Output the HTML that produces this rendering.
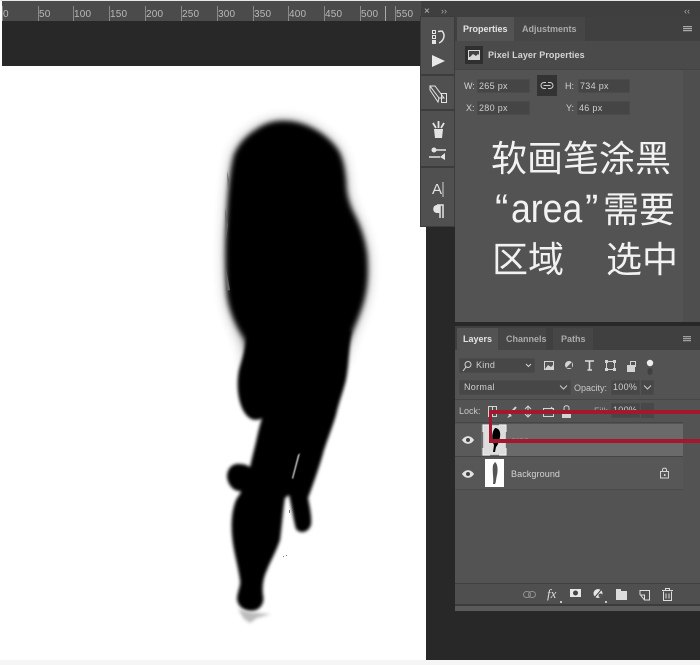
<!DOCTYPE html>
<html><head><meta charset="utf-8"><style>
html,body{margin:0;padding:0;background:#fff}
#p{position:relative;width:700px;height:665px;overflow:hidden;background:#f6f5f5;font-family:"Liberation Sans","Noto Sans CJK SC",sans-serif;color:#d2d2d2;font-size:9px;filter:blur(.3px)}
#p div,#p span.a{position:absolute}
.t{white-space:nowrap;line-height:12px;font-weight:400}
.b{font-weight:700}
.inp{background:#454545;height:14px;box-shadow:inset 0 0 0 1px #4b4b4b;white-space:nowrap;line-height:14px;padding-left:2px;box-sizing:border-box;color:#cfcfcf;font-size:9px;letter-spacing:.3px}
.rt{color:#b8b8b8;font-size:10px;top:9px;line-height:12px;letter-spacing:.2px}
.tick{background:#8a8a8a;width:1px;top:6px;height:15px}
.big{color:#f2f2f2;font-size:36px;line-height:44px;white-space:nowrap;font-family:"Liberation Sans","Noto Sans CJK SC",sans-serif}
svg{position:absolute;overflow:visible}
</style></head><body><div id="p">
<div style="left:2px;top:1px;width:424px;height:20px;background:#4b4b4b"></div>
<div style="left:2px;top:21px;width:424px;height:45px;background:#282828"></div>
<div style="left:2px;top:66px;width:424px;height:594px;background:#fff"></div>
<div style="left:0;top:0;width:2px;height:660px;background:#fff"></div>
<div style="left:426px;top:1px;width:274px;height:659px;background:#282828"></div>
<div style="left:421px;top:1px;width:279px;height:16px;background:#3f3f3f"></div>
<div style="left:0;top:0;width:700px;height:1px;background:#e8e8e8"></div>
<div class="tick" style="left:2px"></div><div class="rt t a" style="left:3px">0</div>
<div class="tick" style="left:38px"></div><div class="rt t a" style="left:39px">50</div>
<div class="tick" style="left:73px"></div><div class="rt t a" style="left:74px">100</div>
<div class="tick" style="left:109px"></div><div class="rt t a" style="left:110px">150</div>
<div class="tick" style="left:145px"></div><div class="rt t a" style="left:146px">200</div>
<div class="tick" style="left:181px"></div><div class="rt t a" style="left:182px">250</div>
<div class="tick" style="left:217px"></div><div class="rt t a" style="left:218px">300</div>
<div class="tick" style="left:253px"></div><div class="rt t a" style="left:254px">350</div>
<div class="tick" style="left:288px"></div><div class="rt t a" style="left:289px">400</div>
<div class="tick" style="left:324px"></div><div class="rt t a" style="left:325px">450</div>
<div class="tick" style="left:360px"></div><div class="rt t a" style="left:361px">500</div>
<div class="tick" style="left:385px;background:#aaa"></div><div class="tick" style="left:395px"></div><div class="rt t a" style="left:396px">550</div>
<svg style="left:0;top:0" width="700" height="665" viewBox="0 0 700 665">
<defs><filter id="f1" x="-30%" y="-30%" width="160%" height="160%"><feGaussianBlur stdDeviation="2.6"/></filter>
<filter id="f0" x="-30%" y="-30%" width="160%" height="160%"><feGaussianBlur stdDeviation="7"/></filter>
<filter id="f2" x="-30%" y="-30%" width="160%" height="160%"><feGaussianBlur stdDeviation="1.5"/></filter>
<filter id="f3" x="-50%" y="-50%" width="200%" height="200%"><feGaussianBlur stdDeviation="1.5"/></filter>
<filter id="f4" x="-50%" y="-50%" width="200%" height="200%"><feGaussianBlur stdDeviation=".6"/></filter></defs>
<path filter="url(#f0)" opacity=".45" d="M283 122C295 122 304 125 312 129C322 134 331 142 337 150C342 158 344 170 345 182C345 194 348 203 352 212C358 223 364 238 366 255C367 270 367 285 363 300C360 312 354 325 350 335L340 365L300 395L250 380L245 345C236 325 230 310 228 295C226 270 226 240 228 215C229 195 231 170 235 155C241 141 251 133 262 127C270 123 277 122 283 122Z"/>
<path filter="url(#f1)" d="M283 121C295 121 304 124 312 128C322 133 332 141 338 150C343 158 345 170 346 182C346 194 349 203 353 212C359 223 365 238 367 255C368 270 368 285 364 300C361 312 355 325 351 335L340 365L300 395L250 380L245 340C235 325 229 310 227 295C225 270 225 240 227 215C228 195 230 170 234 155C240 141 250 133 262 126C270 122 277 121 283 121Z"/>
<path filter="url(#f2)" d="M248 332L351 330C349 345 349 365 346 380C343 392 339 402 336 415C332 428 328 438 324 450C320 465 314 482 308 498C310 508 312 518 311 525C308 533 300 534 296 529C293 518 292 508 289 495L285 498C283 510 282 525 280 540C276 552 270 562 267 570C263 578 262 588 263 595C265 603 260 611 251 611C243 611 237 605 237 598C238 590 241 585 240 580C238 565 233 550 232 535C231 522 232 510 236 500C239 495 241 493 241 491C234 492 228 485 227 477C227 468 233 463 240 464C245 464 248 466 250 467C252 458 254 450 256 442C258 432 260 425 262 418C256 422 248 420 243 410C238 400 236 385 239 370C243 355 247 345 248 332Z"/>
<path filter="url(#f4)" fill="#ddd" d="M300 453L293 479L292 478L298 455Z"/>
<path filter="url(#f3)" fill="#bcbcbc" d="M238 609C245 612 258 613 271 614L257 618L250 623L244 619Z"/>
<path fill="#777" d="M289 510h1v3h-1zM283 556h1v1h-1zM286 555h1v1h-1z"/>
<path fill="#666" d="M227 171L229 180L228 190ZM225 208L228 225L226 240ZM226 268L230 290L226 291Z"/>
</svg>
<div style="left:421px;top:17px;width:33px;height:209px;background:#505050;box-shadow:0 0 0 1px #3c3c3c"></div>
<div style="left:421px;top:74px;width:33px;height:2px;background:#3c3c3c"></div>
<div style="left:421px;top:109px;width:33px;height:2px;background:#3c3c3c"></div>
<div style="left:421px;top:166px;width:33px;height:2px;background:#3c3c3c"></div>
<div class="t a" style="left:424px;top:6px;color:#c4c4c4;font-size:10px">×</div>
<div class="t a" style="left:441px;top:5px;color:#aaa;font-size:9px">››</div>
<div class="t a" style="left:684px;top:5px;color:#aaa;font-size:9px">‹‹</div>
<svg style="left:421px;top:17px" width="33" height="209" viewBox="0 0 33 209" fill="none" stroke="#e4e4e4">
<rect x="11.5" y="13.5" width="3" height="3"/><rect x="11.5" y="18.5" width="3" height="3"/><rect x="11" y="23" width="4" height="4" fill="#e4e4e4" stroke="none"/>
<path d="M17 14.500L21 14C24 17 24 23 18 26" stroke-width="1.500"/>
<path d="M11 38L24 44L11 50Z" fill="#e8e8e8" stroke="none"/>
<path d="M9 69L14 69L23 81L18 81ZM9 69L9 73L17 85L18 81" stroke-width="1"/><rect x="20.500" y="76.500" width="5" height="9"/>
<path d="M15 111L12 106M17.500 111L17.500 104M20 111L23 106" stroke-width="1.800"/><path d="M13 112H22L21 121H14Z" fill="#e4e4e4" stroke="none"/>
<circle cx="13" cy="133" r="2.500" fill="#e4e4e4" stroke="none"/>
<path d="M15 133H25M8 140H19" stroke-width="1.500"/>
<path d="M19 140L24 136V143Z" fill="#e4e4e4" stroke="none"/>
<path d="M22 165V180" stroke-width="1" stroke="#cfcfcf"/>
<path d="M16 188H22V201M19 188V201" stroke-width="1.500"/>
<path d="M16 188C11 188 11 196 16 196H19V188Z" fill="#e4e4e4" stroke="none"/>
</svg>
<div class="t a" style="left:432px;top:182px;font-size:15px;line-height:16px;color:#e2e2e2">A</div>
<div style="left:455px;top:17px;width:245px;height:305px;background:#535353"></div>
<div style="left:455px;top:17px;width:245px;height:24px;background:#404040"></div>
<div style="left:457px;top:17px;width:57px;height:24px;background:#535353"></div>
<div style="left:514px;top:17px;width:71px;height:24px;background:#464646"></div>
<div class="t b a" style="left:463px;top:23px;color:#e4e4e4">Properties</div>
<div class="t b a" style="left:522px;top:23px;color:#aaa">Adjustments</div>
<div style="left:683px;top:26px;width:9px;height:6px;background:repeating-linear-gradient(#a8a8a8 0 1px,#585858 1px 2px)"></div>
<div style="left:455px;top:41px;width:245px;height:28px;background:#4a4a4a"></div>
<div style="left:455px;top:69px;width:245px;height:1px;background:#444"></div>
<div style="left:465px;top:46px;width:18px;height:18px;background:#2f2f2f"></div>
<svg style="left:465px;top:46px" width="18" height="18" viewBox="0 0 18 18"><rect x="3" y="4" width="12" height="10" fill="#d8d8d8"/><rect x="4" y="5" width="10" height="6" fill="#444"/><path d="M4 12L8 8L11 10L13 8L14 9V13H4Z" fill="#d8d8d8"/></svg>
<div class="t b a" style="left:488px;top:49px;color:#d4d4d4;letter-spacing:.1px">Pixel Layer Properties</div>
<div style="left:683px;top:70px;width:17px;height:252px;background:#4e4e4e"></div>
<div class="t a" style="left:464px;top:80px">W:</div><div class="inp" style="left:477px;top:79px;width:53px">265 px</div>
<div class="t a" style="left:466px;top:102px">X:</div><div class="inp" style="left:477px;top:101px;width:53px">280 px</div>
<div style="left:537px;top:75px;width:20px;height:21px;background:#333"></div>
<svg style="left:537px;top:75px" width="20" height="21" viewBox="0 0 20 21" fill="none" stroke="#d0d0d0"><path d="M9 7.500H7a3 3 0 0 0 0 6H9M11 7.500H13a3 3 0 0 1 0 6H11M6.500 10.500H13.500"/></svg>
<div class="t a" style="left:565px;top:80px">H:</div><div class="inp" style="left:578px;top:79px;width:52px">734 px</div>
<div class="t a" style="left:566px;top:102px">Y:</div><div class="inp" style="left:577px;top:101px;width:53px">46 px</div>
<div class="big a" style="left:491px;top:137px">软画笔涂黑</div>
<div class="big a" style="left:495px;top:187px;font-size:40px">“</div>
<div class="big a" style="left:511px;top:187px;font-size:40px;transform:scaleX(.89);transform-origin:0 0">area</div>
<div class="big a" style="left:585px;top:187px;font-size:40px">”</div>
<div class="big a" style="left:603px;top:188px">需要</div>
<div class="big a" style="left:492px;top:238px">区域</div>
<div class="big a" style="left:606px;top:238px">选中</div>
<div style="left:455px;top:326px;width:245px;height:285px;background:#535353"></div>
<div style="left:455px;top:326px;width:245px;height:24px;background:#404040"></div>
<div style="left:457px;top:328px;width:41px;height:22px;background:#535353"></div>
<div style="left:498px;top:328px;width:48px;height:22px;background:#464646"></div>
<div style="left:553px;top:328px;width:40px;height:22px;background:#464646"></div>
<div class="t b a" style="left:463px;top:333px;color:#e4e4e4">Layers</div>
<div class="t b a" style="left:506px;top:333px;color:#aaa">Channels</div>
<div class="t b a" style="left:561px;top:333px;color:#aaa">Paths</div>
<div style="left:683px;top:336px;width:8px;height:6px;background:repeating-linear-gradient(#a0a0a0 0 1px,#585858 1px 2px)"></div>
<div class="inp" style="left:459px;top:358px;width:76px;height:15px;background:#474747;padding-left:17px;line-height:15px">Kind</div>
<svg style="left:459px;top:358px" width="76" height="15" viewBox="0 0 76 15" fill="none" stroke="#d4d4d4"><circle cx="9" cy="6.500" r="3"/><path d="M7 9L4 13"/><path d="M67 6l2.500 2.500L72 6"/></svg>
<svg style="left:540px;top:355px" width="120" height="22" viewBox="0 0 120 22" fill="none" stroke="#d4d4d4">
<rect x="4.500" y="6.500" width="9" height="8"/><path d="M5 14L8 10L11 12L13 10V14Z" fill="#d4d4d4" stroke="none"/>
<circle cx="29" cy="10" r="4" fill="#d4d4d4" stroke="none"/><path d="M26 13L32 7L32 13Z" fill="#535353" stroke="none"/>
<path d="M45 6H54M49.500 6V15M47.500 15H52" stroke-width="1.600" stroke="#dcdcdc"/>
<rect x="66.500" y="6.500" width="8" height="8"/><rect x="65" y="5" width="3" height="3" fill="#d4d4d4" stroke="none"/><rect x="73" y="5" width="3" height="3" fill="#d4d4d4" stroke="none"/><rect x="65" y="13" width="3" height="3" fill="#d4d4d4" stroke="none"/><rect x="73" y="13" width="3" height="3" fill="#d4d4d4" stroke="none"/>
<rect x="87" y="10" width="8" height="7" fill="#d4d4d4" stroke="none"/><rect x="90.500" y="6.500" width="5" height="5"/>
<circle cx="110" cy="8" r="3.200" fill="#eee" stroke="none"/><rect x="107.500" y="13" width="5" height="7" rx="2.500" fill="#404040" stroke="none"/>
</svg>
<div class="inp" style="left:459px;top:380px;width:112px;height:15px;background:#474747;padding-left:5px;line-height:15px">Normal</div>
<svg style="left:559px;top:384px" width="10" height="7" fill="none" stroke="#ccc"><path d="M1 1.500l3.500 3.500L8 1.500"/></svg>
<div class="t a" style="left:574px;top:382px;color:#c8c8c8">Opacity:</div>
<div class="inp" style="left:611px;top:380px;width:29px;height:15px;background:#474747;line-height:15px">100%</div>
<div class="inp" style="left:641px;top:380px;width:13px;height:15px;background:#474747"></div>
<svg style="left:643px;top:384px" width="10" height="7" fill="none" stroke="#ccc"><path d="M1 1.500l3.500 3.500L8 1.500"/></svg>
<div style="left:455px;top:399px;width:245px;height:1px;background:#464646"></div>
<div class="t a" style="left:459px;top:405px;color:#c8c8c8">Lock:</div>
<svg style="left:485px;top:402px" width="90" height="18" viewBox="0 0 90 18" fill="none" stroke="#d4d4d4">
<rect x="3.500" y="4.500" width="8" height="10"/><path d="M7.500 4V15"/>
<path d="M24 13L31 5" stroke-width="2"/><path d="M22 16L25 12L27 14Z" fill="#d4d4d4" stroke="none"/>
<path d="M43 4V15M40 7L43 4L46 7M40 12L43 15L46 12"/>
<rect x="58.500" y="6.500" width="10" height="8"/><path d="M66 5L69 8"/>
<rect x="77" y="9" width="9" height="7" fill="#d4d4d4" stroke="none"/><path d="M79 9V6C79 3 84 3 84 6V9"/>
</svg>
<div class="t a" style="left:594px;top:405px;color:#a8a8a8">Fill:</div>
<div class="inp" style="left:611px;top:403px;width:29px;height:15px;background:#474747;line-height:15px">100%</div>
<div style="left:641px;top:403px;width:13px;height:15px;background:#484848"></div>
<div style="left:455px;top:422px;width:228px;height:1px;background:#464646"></div>
<div style="left:481px;top:424px;width:202px;height:32px;background:#6a6a6a"></div>
<div style="left:455px;top:424px;width:26px;height:32px;background:#5a5a5a"></div>
<div style="left:455px;top:456px;width:228px;height:1px;background:#454545"></div>
<div style="left:455px;top:457px;width:228px;height:32px;background:#575757"></div>
<div style="left:455px;top:489px;width:228px;height:1px;background:#4a4a4a"></div>
<svg style="left:461px;top:434px" width="14" height="46" viewBox="0 0 14 46"><path d="M1 6C4 1 10 1 13 6C10 11 4 11 1 6Z" fill="#e4e4e4"/><circle cx="7" cy="6" r="2" fill="#444"/><path d="M1 40C4 35 10 35 13 40C10 45 4 45 1 40Z" fill="#e4e4e4"/><circle cx="7" cy="40" r="2" fill="#444"/></svg>
<div style="left:483px;top:425px;width:23px;height:30px;background:#ddd;box-shadow:inset 0 0 0 1px #ccc"></div>
<svg style="left:483px;top:425px" width="23" height="30" viewBox="0 0 23 30"><path d="M12 3C16 3 18 7 17 12C16 18 14 21 13 22L12 27L10 27L11 20C9 16 8 8 12 3Z" fill="#000"/><path d="M0 7V0H7M16 0H23V7M23 23V30H16M7 30H0V23" fill="none" stroke="#fff"/></svg>
<div class="t a" style="left:511px;top:434px;color:#8f8f8f">area</div>
<div style="left:485px;top:459px;width:19px;height:28px;background:#fff"></div>
<svg style="left:485px;top:459px" width="19" height="28" viewBox="0 0 19 28"><path d="M10 3C13 5 13 12 12 16C11 20 11 24 10 25L8 25C9 20 7 12 8 6Z" fill="#555"/></svg>
<div class="t a" style="left:511px;top:468px;color:#d4d4d4;letter-spacing:.1px">Background</div>
<svg style="left:659px;top:467px" width="11" height="12" viewBox="0 0 11 12" fill="none" stroke="#d4d4d4"><rect x="1.500" y="4.500" width="8" height="6.500"/><path d="M3.500 4.500V3C3.500 0.500 7.500 0.500 7.500 3V4.500"/><rect x="5" y="7" width="1.500" height="2" fill="#d4d4d4" stroke="none"/></svg>
<div style="left:489px;top:410px;width:211px;height:4px;background:#a3182e"></div>
<div style="left:489px;top:439px;width:211px;height:4px;background:#a3182e"></div>
<div style="left:489px;top:410px;width:3px;height:33px;background:#a3182e"></div>
<div style="left:455px;top:583px;width:245px;height:1px;background:#404040"></div>
<div style="left:455px;top:584px;width:245px;height:20px;background:#4f4f4f"></div>
<div style="left:455px;top:604px;width:245px;height:2px;background:#3c3c3c"></div>
<div style="left:455px;top:606px;width:245px;height:5px;background:#5a5a5a"></div>
<svg style="left:520px;top:586px" width="155" height="20" viewBox="0 0 155 20" fill="none" stroke="#dedede">
<g stroke="#8f8f8f"><rect x="3.500" y="5.500" width="7" height="6" rx="3"/><rect x="8.500" y="5.500" width="7" height="6" rx="3"/></g>
<rect x="50" y="3" width="11" height="8" fill="#e6e6e6" stroke="none"/><circle cx="55.500" cy="7" r="2.500" fill="#444" stroke="none"/>
<circle cx="78" cy="7.500" r="4.500" fill="#e6e6e6" stroke="none"/><path d="M75 11L81 4" stroke="#444" stroke-width="1"/><circle cx="80.500" cy="9.500" r="2" fill="#555" stroke="none"/>
<rect x="96" y="5" width="11" height="9" fill="#dcdcdc" stroke="none"/><rect x="96" y="3" width="5" height="2" fill="#dcdcdc" stroke="none"/>
<path d="M120 9V4.500H129.500V14H124.500L120.500 9H124.500V14"/>
<path d="M143.500 5.500V14.500H151.500V5.500M142 4.500H153M145.500 4V2.500H149.500V4M146 7.500V12.500M149 7.500V12.500"/>
<circle cx="41" cy="16" r="1" fill="#eee" stroke="none"/><circle cx="86" cy="16" r="1" fill="#eee" stroke="none"/>
</svg>
<div class="a t" style="left:547px;top:587px;font-family:'Liberation Serif',serif;font-style:italic;font-size:13px;line-height:14px;color:#dcdcdc">fx</div>
</div></body></html>
